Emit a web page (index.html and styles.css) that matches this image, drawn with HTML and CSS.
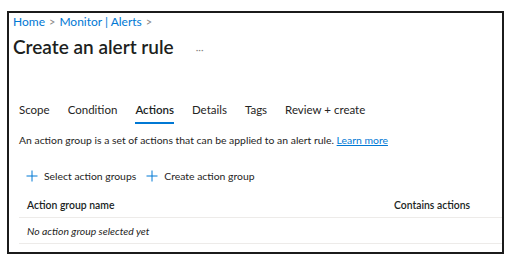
FILE: index.html
```html
<!DOCTYPE html>
<html>
<head>
<meta charset="utf-8">
<link rel="stylesheet" href="styles.css">
</head>
<body>
<div class="frame">
  <div class="crumbs">
    <a class="link">Home</a><span class="chev">&gt;</span><a class="link">Monitor | Alerts</a><span class="chev">&gt;</span>
  </div>
  <div class="title-row">
    <h1 class="title">Create an alert rule</h1>
    <span class="more">···</span>
  </div>
  <div class="tabs">
    <span class="tab">Scope</span>
    <span class="tab">Condition</span>
    <span class="tab active">Actions</span>
    <span class="tab">Details</span>
    <span class="tab">Tags</span>
    <span class="tab">Review + create</span>
  </div>
  <p class="desc">An action group is a set of actions that can be applied to an alert rule. <a class="learn">Learn more</a></p>
  <div class="commands">
    <span class="cmd"><svg class="plus" viewBox="0 0 12 12" width="12" height="12"><path d="M6 0.5V11.5M0.5 6H11.5" stroke="#0078d4" stroke-width="1"/></svg>Select action groups</span>
    <span class="cmd"><svg class="plus" viewBox="0 0 12 12" width="12" height="12"><path d="M6 0.5V11.5M0.5 6H11.5" stroke="#0078d4" stroke-width="1"/></svg>Create action group</span>
  </div>
  <div class="table">
    <div class="thead">
      <span class="col-name">Action group name</span>
      <span class="col-contains">Contains actions</span>
    </div>
    <div class="trow">No action group selected yet</div>
  </div>
</div>
</body>
</html>
```
FILE: styles.css
```css
* { box-sizing: border-box; }
html, body { margin: 0; padding: 0; background: #fff; }
body {
  font-family: "Lato", "Open Sans", sans-serif;
  color: #252423;
}
.frame {
  margin: 11px 0 0 7px;
  width: 497px;
  height: 243px;
  border: 2px solid #1b1b1b;
  padding: 0;
}
.crumbs {
  padding: 1px 0 0 4px;
  font-size: 12px;
  line-height: 16px;
  display: flex;
  align-items: center;
}
.link { color: #0078d4; }
.chev { color: #8a8886; margin: 0 4px; font-size: 11px; }
.title-row {
  display: flex;
  align-items: center;
  padding-left: 4px;
  margin-top: 4px;
}
.title {
  margin: 0;
  font-size: 19px;
  font-weight: 600;
  line-height: 26px;
  color: #201f1e;
}
.more { color: #8a8886; font-size: 10px; margin-left: 22px; margin-top: 4px; }
.tabs {
  display: flex;
  gap: 0;
  padding-left: 10px;
  margin-top: 42px;
  font-size: 11.5px;
  line-height: 16px;
}
.tab { margin-right: 18px; padding-bottom: 4px; color: #252423; }
.tab.active { font-weight: 600; color: #201f1e; border-bottom: 2px solid #0078d4; }
.desc {
  margin: 8px 0 0 10px;
  font-size: 10.4px;
  line-height: 16px;
}
.learn { color: #0078d4; text-decoration: underline; }
.commands {
  display: flex;
  padding-left: 17px;
  margin-top: 20px;
  font-size: 10.4px;
  line-height: 16px;
}
.cmd { display: flex; align-items: center; margin-right: 10px; }
.plus { margin-right: 6px; }
.table {
  margin: 8px 0 0 10px;
  font-size: 10.4px;
}
.thead {
  display: flex;
  justify-content: space-between;
  padding: 0 32px 0 8px;
  height: 26px;
  align-items: center;
  font-weight: 600;
  color: #201f1e;
  border-bottom: 1px solid #edebe9;
}
.trow {
  padding-left: 8px;
  height: 26px;
  display: flex;
  align-items: center;
  font-style: italic;
  border-bottom: 1px solid #edebe9;
}
```
